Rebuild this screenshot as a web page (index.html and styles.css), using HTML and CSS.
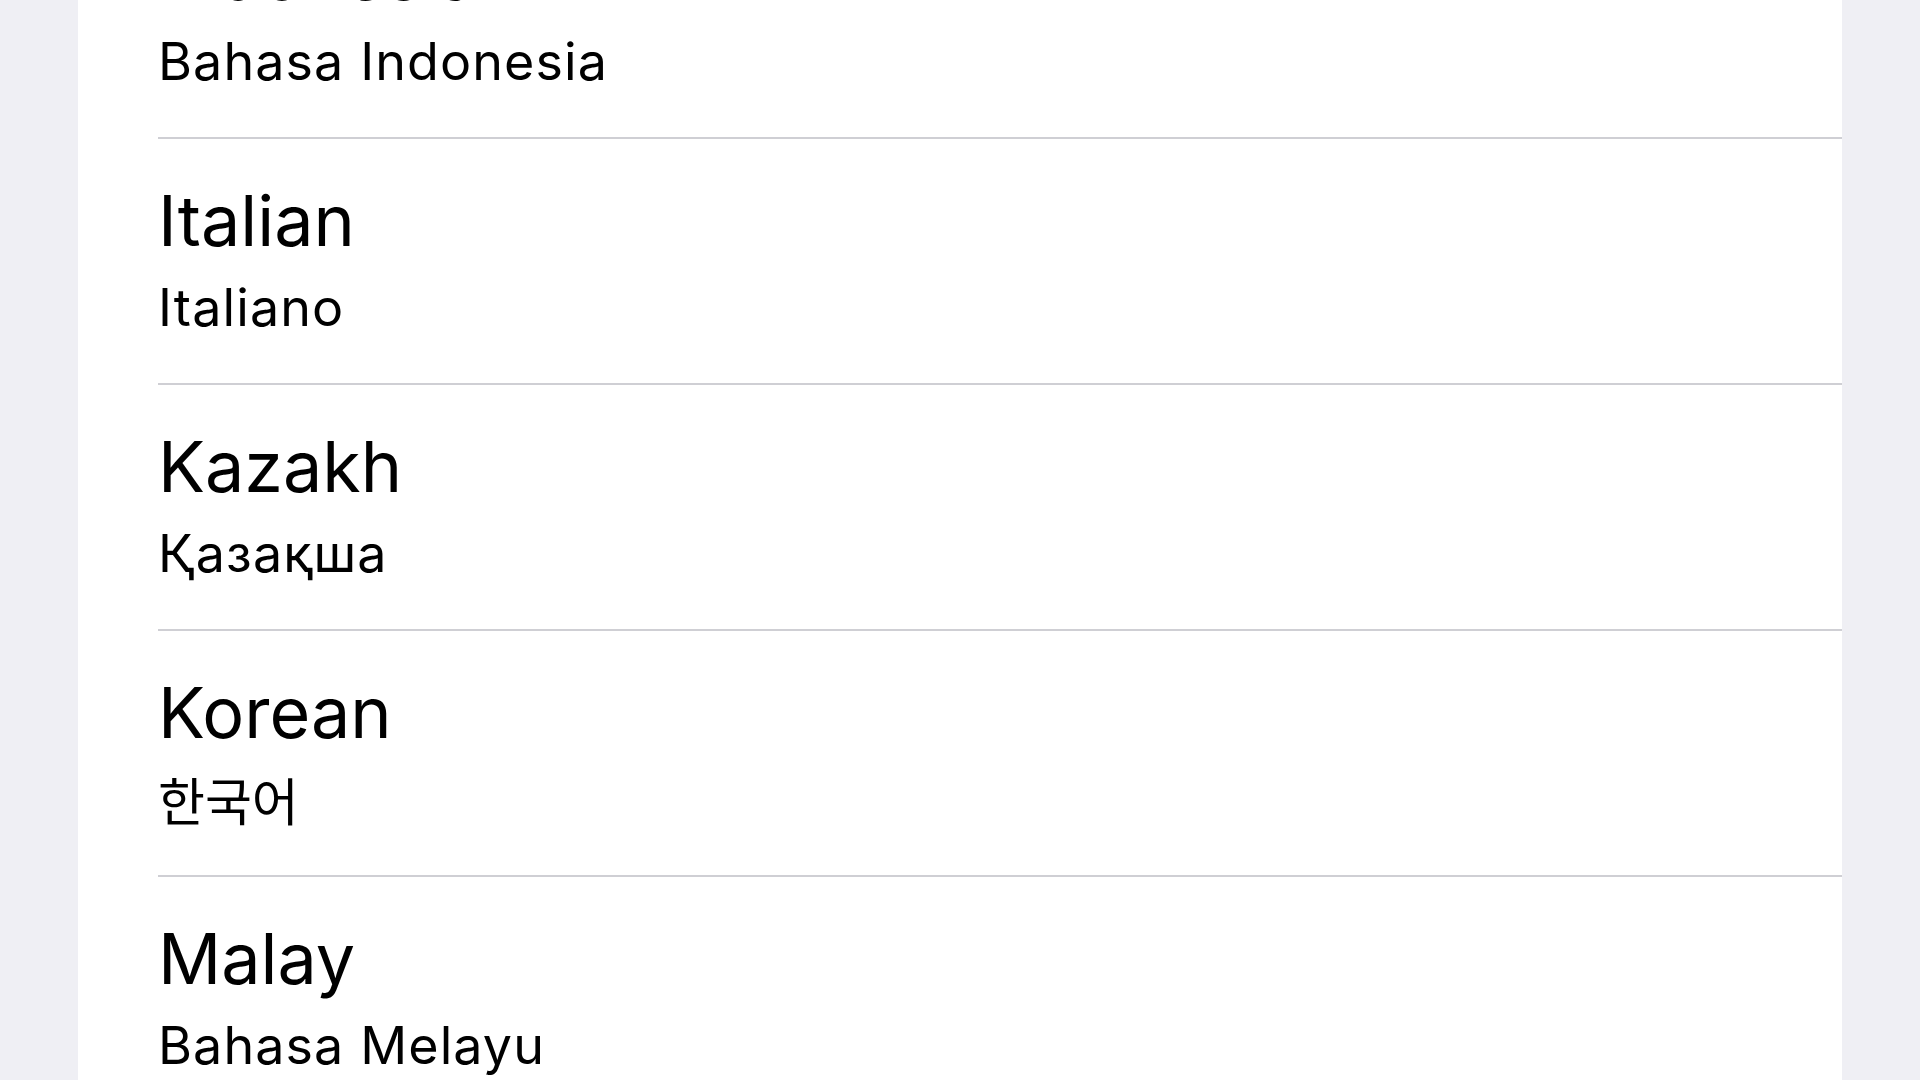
FILE: index.html
```html
<!DOCTYPE html>
<html lang="en">
<head>
    <meta charset="UTF-8">
    <meta name="viewport" content="width=device-width, initial-scale=1.0">
    <title>Language</title>
    <link rel="stylesheet" href="styles.css">
</head>
<body>
    <div class="panel">
        <ul class="lang-list">
            <li class="lang-row">
                <div class="lang-name">Indonesian</div>
                <div class="lang-native">Bahasa Indonesia</div>
            </li>
            <li class="lang-row">
                <div class="lang-name">Italian</div>
                <div class="lang-native">Italiano</div>
            </li>
            <li class="lang-row">
                <div class="lang-name">Kazakh</div>
                <div class="lang-native">Қазақша</div>
            </li>
            <li class="lang-row">
                <div class="lang-name">Korean</div>
                <div class="lang-native" lang="ko">한국어</div>
            </li>
            <li class="lang-row">
                <div class="lang-name">Malay</div>
                <div class="lang-native">Bahasa Melayu</div>
            </li>
        </ul>
    </div>
</body>
</html>
```

FILE: styles.css
```css
html, body {
    margin: 0;
    height: 100%;
}

body {
    background-color: #efeff4;
    color: #000;
    font-family: Inter, "Noto Sans CJK KR", sans-serif;
    overflow: hidden;
}

.panel {
    margin: 0 78px;
    height: 100%;
    background-color: #fff;
    overflow: hidden;
}

/* list is scrolled, first row partly hidden */
.lang-list {
    list-style: none;
    margin: -107px 0 0 80px;
    padding: 0;
}

.lang-row {
    box-sizing: border-box;
    height: 246px;
    padding-top: 41.5px;
    border-bottom: 2px solid #cfcfd4;
}

.lang-name {
    font-size: 70px;
    line-height: 80px;
}

.lang-native {
    margin-top: 7.6px;
    font-size: 52px;
    line-height: 80px;
    letter-spacing: 1.1px;
}

.lang-native:lang(ko) {
    margin-top: 6.6px;
    font-family: "Noto Sans CJK KR", sans-serif;
    font-size: 51px;
    letter-spacing: 0;
}
```
